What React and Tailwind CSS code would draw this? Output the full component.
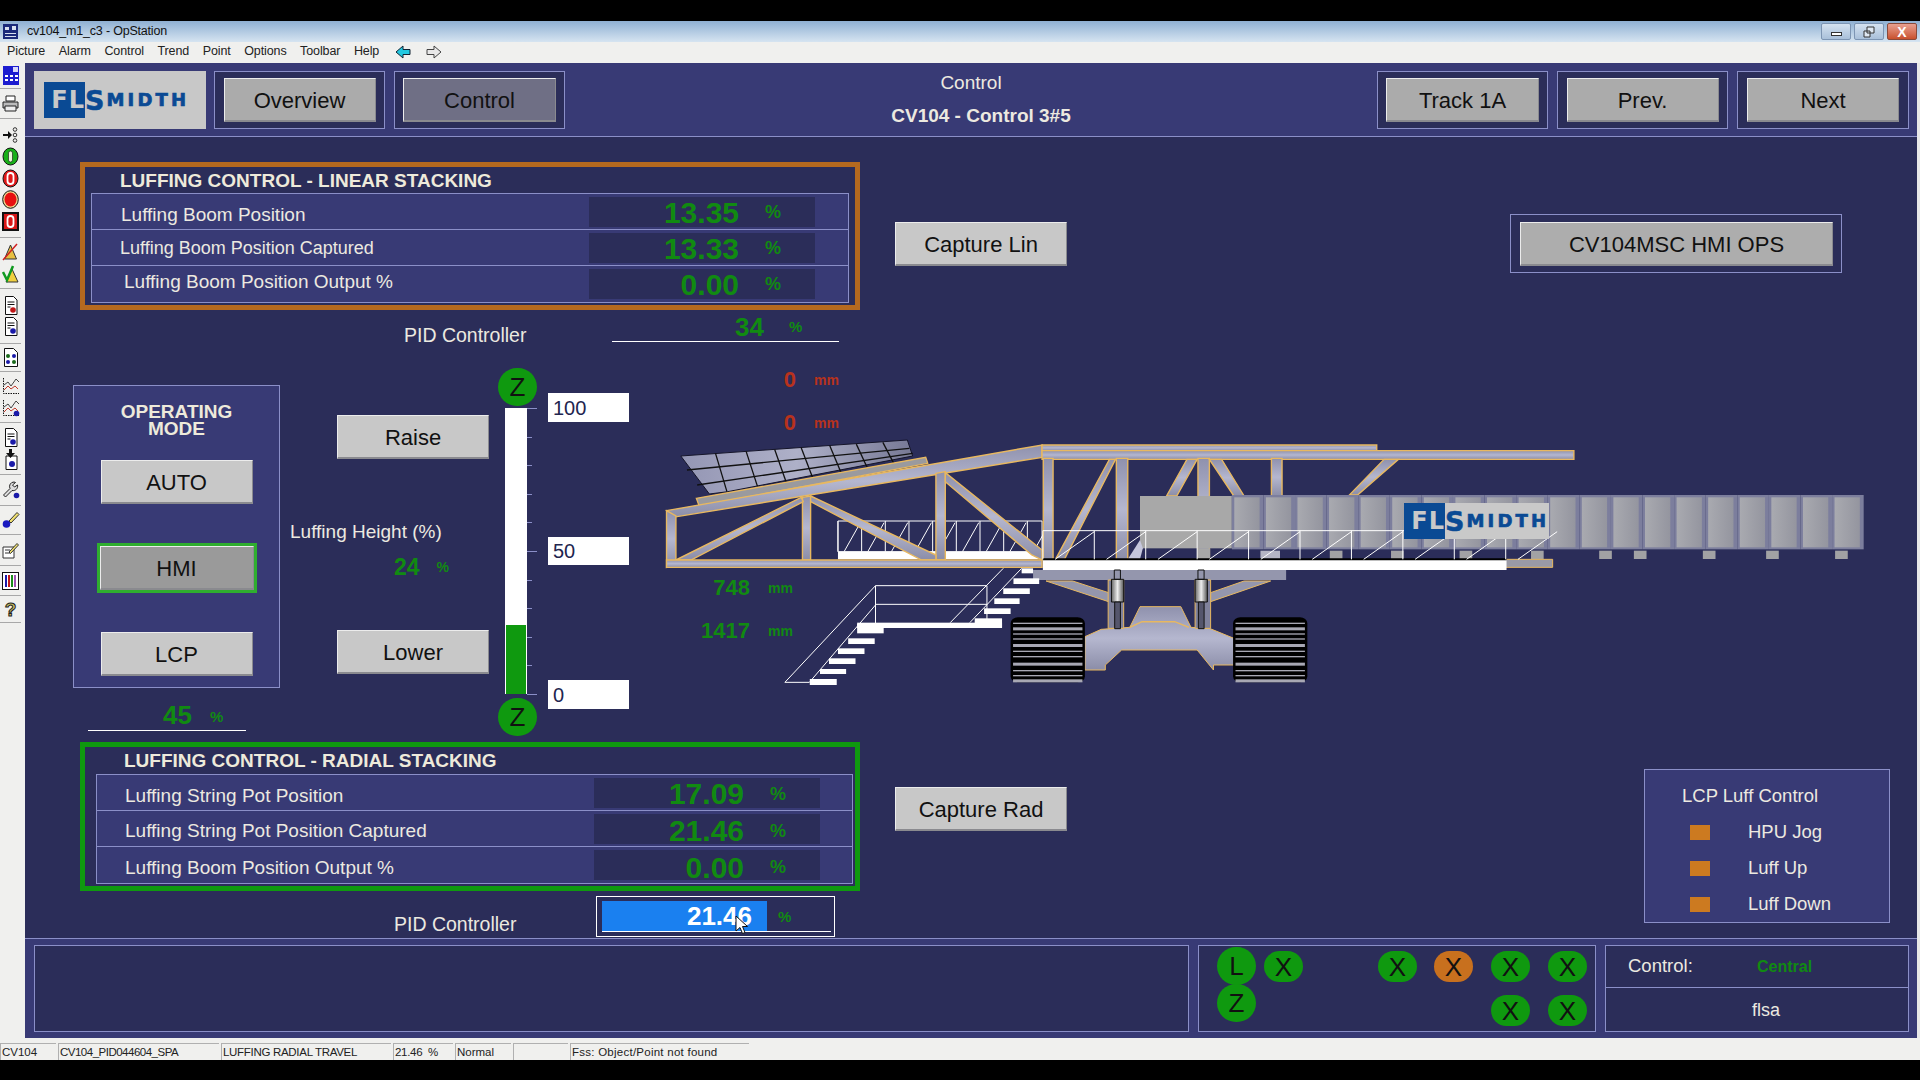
import React from "react";

const hoodX = [185, 260, 330, 395, 465, 530, 595];
const segments = Array.from({ length: 20 }, (_, i) => 1450 + i * 77.4);
const legs = [1690, 1840, 2008, 2183, 2350, 2435, 2604, 2759, 2928];
const stairSteps = [
  [820, 887, 595, 622], [843, 908, 565, 582], [868, 930, 535, 552], [890, 955, 505, 522], [915, 978, 475, 492], [935, 963, 445, 460],
  [532, 597, 612, 640], [510, 575, 655, 672], [485, 550, 685, 702], [463, 528, 715, 732], [441, 505, 747, 762], [416, 482, 777, 795],
];
const trackLines = [608, 622, 640, 655, 672, 692, 708, 728, 750, 765, 778];
const beams = [
  "65,272 985,75 985,112 80,292",
  "65,272 88,288 88,425 65,442",
  "398,232 418,228 418,420 398,420",
  "725,160 748,155 748,420 725,420",
  "88,420 395,232 400,245 125,420",
  "418,228 725,405 725,420 690,420 418,245",
  "748,158 985,390 985,420 960,405 748,185",
  "65,420 985,420 985,442 65,442",
  "985,75 1805,75 1805,92 985,92",
  "985,92 2288,92 2288,118 985,118",
  "988,115 1012,115 1012,420 988,420",
  "1167,115 1195,115 1195,420 1167,420",
  "1367,115 1395,115 1395,420 1367,420",
  "1547,115 1573,115 1573,228 1547,228",
  "1150,118 1165,118 1040,418 1018,418",
  "1340,118 1365,118 1315,228 1290,228",
  "1395,118 1425,118 1480,228 1455,228",
  "1823,118 1858,118 1758,225 1738,225",
];

function Diagram() {
  // coordinates are in the zoomed crop scale, the viewBox squeezes them back
  return (
    <svg className="absolute left-[615px] top-[283px]" width="1280" height="290" viewBox="0 0 3136 870" preserveAspectRatio="none">
      <defs>
        <linearGradient id="steel" x1="0" y1="0" x2="0" y2="1">
          <stop offset="0" stopColor="#8f91ad" />
          <stop offset="0.5" stopColor="#b5b7cf" />
          <stop offset="1" stopColor="#8b8da8" />
        </linearGradient>
        <linearGradient id="hood" x1="0" y1="0" x2="1" y2="0">
          <stop offset="0" stopColor="#9496b4" />
          <stop offset="0.5" stopColor="#aeb0c8" />
          <stop offset="1" stopColor="#777995" />
        </linearGradient>
        <linearGradient id="seg" x1="0" y1="0" x2="1" y2="0">
          <stop offset="0" stopColor="#a9aab0" />
          <stop offset="1" stopColor="#94959f" />
        </linearGradient>
        <linearGradient id="cyl" x1="0" y1="0" x2="1" y2="0">
          <stop offset="0" stopColor="#666" />
          <stop offset="0.5" stopColor="#eee" />
          <stop offset="1" stopColor="#555" />
        </linearGradient>
      </defs>

      {/* hood */}
      <polygon points="100,108 655,60 668,108 215,215 170,222" fill="url(#hood)" stroke="#15152a" vectorEffect="non-scaling-stroke" />
      {hoodX.map((x) => (
        <line key={x} x1={x} y1={100 - (x - 185) * 0.08} x2={x + 28} y2={215 - (x - 185) * 0.2} stroke="#111" strokeWidth="1.300" vectorEffect="non-scaling-stroke" />
      ))}
      <polyline points="115,150 660,85" fill="none" stroke="#111" strokeWidth="1.300" vectorEffect="non-scaling-stroke" />
      <polyline points="140,195 668,100" fill="none" stroke="#111" strokeWidth="1.300" vectorEffect="non-scaling-stroke" />
      <polygon points="138,235 700,112 705,130 145,258" fill="#9a9a9e" stroke="#e8b860" strokeWidth="1.300" vectorEffect="non-scaling-stroke" />

      {/* rear railing and walkway */}
      <rect x="485" y="303" width="500" height="92" fill="none" stroke="#fff" vectorEffect="non-scaling-stroke" />
      {Array.from({ length: 9 }, (_, i) => 485 + i * 58).map((x) => (
        <g key={x}>
          <line x1={x} y1="303" x2={x} y2="395" stroke="#fff" vectorEffect="non-scaling-stroke" />
          <line x1={x + 15} y1="395" x2={x + 55} y2="308" stroke="#fff" vectorEffect="non-scaling-stroke" />
        </g>
      ))}
      <rect x="485" y="395" width="500" height="23" fill="#fff" />

      {/* truss */}
      {beams.map((p) => (
        <polygon key={p} points={p} fill="url(#steel)" stroke="#e8b860" strokeWidth="1.400" vectorEffect="non-scaling-stroke" />
      ))}

      {/* conveyor sections */}
      <rect x="1225" y="228" width="225" height="157" fill="#a8a8a8" />
      <rect x="1365" y="385" width="32" height="33" fill="#a8a8a8" />
      <polygon points="1195,418 1225,360 1232,385 1225,418" fill="#c5c6dc" />
      {segments.map((x) => (
        <g key={x}>
          <rect x={x} y="225" width="77.4" height="163" fill="#7c7e9d" />
          <rect x={x + 6} y="232" width="62" height="150" fill="url(#seg)" />
        </g>
      ))}
      {legs.map((x) => (
        <rect key={x} x={x} y="392" width="31" height="25" fill="#a2a2a4" />
      ))}
      <rect x="1520" y="392" width="48" height="26" fill="#b5b5c4" />

      {/* deck */}
      <rect x="963" y="450" width="620" height="30" fill="#9496ad" />
      <rect x="2120" y="418" width="116" height="24" fill="#9a9aa6" stroke="#e8b860" vectorEffect="non-scaling-stroke" />
      <rect x="987" y="418" width="1136" height="32" fill="#fff" />
      <line x1="987" y1="418" x2="2123" y2="418" stroke="#000" strokeWidth="2" vectorEffect="non-scaling-stroke" />
      <polyline points="987,332 2123,332" fill="none" stroke="#fff" vectorEffect="non-scaling-stroke" />
      {Array.from({ length: 10 }, (_, i) => 987 + i * 126).map((x) => (
        <g key={x}>
          <line x1={x} y1="332" x2={x} y2="418" stroke="#fff" vectorEffect="non-scaling-stroke" />
          <line x1={x + 30} y1="418" x2={x + 126} y2="335" stroke="#fff" vectorEffect="non-scaling-stroke" />
        </g>
      ))}

      {/* stairs */}
      {[
        [355, 787, 577, 497], [415, 787, 577, 555], [577, 497, 850, 497], [577, 553, 850, 553], [850, 497, 850, 610],
        [577, 497, 577, 610], [760, 608, 890, 445], [808, 608, 935, 445], [355, 787, 415, 787],
      ].map(([a, b, c, d]) => (
        <line key={`${a}${b}${c}${d}`} x1={a} y1={b} x2={c} y2={d} stroke="#fff" vectorEffect="non-scaling-stroke" />
      ))}
      <rect x="532" y="608" width="355" height="16" fill="#fff" />
      {stairSteps.map(([x1, x2, y1, y2]) => (
        <rect key={x1} x={x1} y={y1} width={x2 - x1} height={y2 - y1} fill="#fff" />
      ))}

      {/* crawlers */}
      <polygon points="1090,650 1130,628 1200,622 1225,560 1325,560 1350,622 1395,625 1455,655 1455,735 1405,735 1405,750 1365,690 1180,690 1140,735 1140,750 1090,750" fill="url(#steel)" stroke="#e8b860" vectorEffect="non-scaling-stroke" />
      <polyline points="1200,622 1230,605 1310,605 1345,622" fill="none" stroke="#e8b860" strokeWidth="1.500" vectorEffect="non-scaling-stroke" />
      <polygon points="995,483 1060,483 1148,518 1148,545" fill="#9496ad" stroke="#e8b860" vectorEffect="non-scaling-stroke" />
      <polygon points="1545,483 1480,483 1398,518 1398,545" fill="#9496ad" stroke="#e8b860" vectorEffect="non-scaling-stroke" />
      <rect x="1147" y="480" width="38" height="145" fill="#80829c" stroke="#e8b860" vectorEffect="non-scaling-stroke" />
      <rect x="1360" y="480" width="38" height="145" fill="#80829c" stroke="#e8b860" vectorEffect="non-scaling-stroke" />
      {[1155, 1360].map((x) => (
        <g key={x}>
          <rect x={x} y="478" width="30" height="68" fill="url(#cyl)" stroke="#111" vectorEffect="non-scaling-stroke" />
          <rect x={x + 7} y="450" width="15" height="28" fill="none" stroke="#111" vectorEffect="non-scaling-stroke" />
          <rect x={x + 8} y="546" width="14" height="80" fill="#55566c" stroke="#111" vectorEffect="non-scaling-stroke" />
        </g>
      ))}
      {[908, 1453].map((x) => (
        <g key={x}>
          <rect x={x} y="592" width="182" height="195" rx="18" fill="#000" />
          {trackLines.map((y, i) => (
            <rect key={y} x={x + 6} y={y} width="170" height={i % 3 === 1 ? 9 : 4} fill="#a8a8b4" />
          ))}
        </g>
      ))}
    </svg>
  );
}

function Logo() {
  return (
    <div className="flex h-[36px] items-center font-['DejaVu_Sans',sans-serif] font-bold">
      <div className="flex h-full w-[41px] items-center justify-end bg-[#0a4a94]">
        <span className="text-[24px] leading-none tracking-[1px] text-[#c9c9c9]">FL</span>
      </div>
      <span className="text-[27px] leading-none text-[#0a4a94] [-webkit-text-stroke:0.5px_#0a4a94]">S</span>
      <span className="ml-[2px] text-[18px] leading-none tracking-[3.200px] text-[#0a4a94] [-webkit-text-stroke:0.7px_#0a4a94]">MIDTH</span>
    </div>
  );
}

function Btn({ children, className = "bg-[#c8c8c8]" }) {
  return (
    <div className={`flex h-[44px] items-center justify-center border-t border-l border-t-[#ececec] border-l-[#ececec] border-b-2 border-r border-b-[#8a8a8f] border-r-[#8a8a8f] pt-[2px] text-[22px] leading-none text-[#111] ${className}`}>
      {children}
    </div>
  );
}

function Frame({ label, className, btnClass }) {
  return (
    <div className={`flex h-[58px] items-start justify-center border border-[#8b8fc8] bg-[#2b2d59] pt-[6px] ${className}`}>
      <Btn className={btnClass}>{label}</Btn>
    </div>
  );
}

function Row({ label, value, labelClass, valueClass = "pt-[2px]" }) {
  return (
    <div className="flex h-[36px] items-center border-b border-[#8b8fc8] last:border-b-0">
      <div className={`w-[497px] text-[#ece9e0] ${labelClass}`}>{label}</div>
      <div className={`flex h-[30px] w-[226px] items-center bg-[#2b2d59] ${valueClass}`}>
        <span className="w-[150px] text-right text-[30px] font-bold leading-none text-[#118a11]">{value}</span>
        <span className="ml-[26px] text-[18px] font-bold text-[#118a11]">%</span>
      </div>
    </div>
  );
}

function Circle({ letter, className = "h-[31px] bg-[#0f990f]" }) {
  return (
    <div className={`flex w-[39px] items-center justify-center rounded-full text-[26px] leading-none text-[#111] ${className}`}>
      {letter}
    </div>
  );
}

const Bar = () => (
  <div className="relative ml-[7px] mt-[2px] h-[286px] w-[22px] bg-white">
    <div className="absolute bottom-0 left-px right-px h-[69px] bg-[#0f990f]" />
    {[0, 1, 2, 3, 4, 5, 6, 7, 8, 9, 10].map((i) => (
      <div key={i} className={`mb-[27.6px] ml-[22px] h-px bg-[#8b8fc8] ${i % 5 === 0 ? "w-[10px]" : "w-[5px]"}`} />
    ))}
  </div>
);

const ScaleInput = ({ value, className }) => (
  <div className={`flex w-[81px] items-center bg-white pl-[5px] text-[20px] leading-none text-[#22254f] ${className}`}>{value}</div>
);

const Mm = ({ value, color, className }) => (
  <div className={`absolute flex w-[90px] items-center justify-end font-bold ${color} ${className}`}>
    <span className="text-[22px] leading-none">{value}</span>
    <span className="ml-[18px] w-[24px] text-[14px] leading-none">mm</span>
  </div>
);

const Tool = ({ children }) => <div className="flex h-[21.5px] w-[20px] items-center justify-center">{children}</div>;

const Sep = ({ children, className }) => (
  <div className={`flex w-full flex-col items-center justify-center border-b border-[#a8a8a8] ${className}`}>{children}</div>
);

const DocIcon = ({ mark = "#1a1aa8" }) => (
  <svg width="14" height="19" viewBox="0 0 14 19">
    <path d="M1.5.5h8l3.5 3.5v14.500h-11.500z" fill="#fff" stroke="#111" />
    <path d="M3.500 6h7M3.500 8.500h7M3.500 11h3" stroke="#111" />
    <circle cx="9" cy="14" r="2.800" fill={mark} />
  </svg>
);

const ChartIcon = ({ dot }) => (
  <svg width="18" height="18" viewBox="0 0 18 18">
    <path d="M1.500 1v15.500H17" fill="none" stroke="#111" strokeDasharray="1.500 1" />
    <path d="M2 8l4-3 3 4 5-7 3 3" fill="none" stroke="#444" />
    <path d="M2 13l4-4 3 3 4-3 3 3" fill="none" stroke="#c0392b" />
    {dot && <circle cx="14.500" cy="14.500" r="2.800" fill="#1a1aa8" />}
  </svg>
);

function Toolbar() {
  return (
    <div className="flex h-full w-[25px] flex-col items-start bg-[#f0f0ee] pr-[4px]">
      <div className="w-[21px]">
        <Sep className="h-[26px]">
          <svg width="16" height="19" viewBox="0 0 16 19">
            <rect width="16" height="19" fill="#1c1cd0" />
            <path d="M2 9h3v2h-3zM7 9h3v2h-3zM12 9h3v2h-3zM2 13h3v2h-3zM7 13h3v2h-3zM12 13h3v2h-3z" fill="#fff" />
            <rect x="10" y="1" width="5" height="5" fill="#d8d8f8" />
          </svg>
        </Sep>
        <Sep className="h-[30px]">
          <svg width="17" height="17" viewBox="0 0 17 17">
            <path d="M4 1h9v5h-9z" fill="#fff" stroke="#222" />
            <path d="M1 7h15v6h-15z" fill="#bbb" stroke="#222" />
            <path d="M3 11h11v5h-11z" fill="#eee" stroke="#222" />
          </svg>
        </Sep>
        <Sep className="h-[119px]">
          <Tool>
            <svg width="15" height="16" viewBox="0 0 15 16">
              <path d="M0 7h5v-3l4 4-4 4v-3h-5z" fill="#111" />
              <circle cx="12" cy="2.500" r="1.800" fill="none" stroke="#333" />
              <circle cx="12" cy="8" r="1.800" fill="none" stroke="#333" />
              <circle cx="12" cy="13.500" r="1.800" fill="none" stroke="#333" />
            </svg>
          </Tool>
          <Tool>
            <svg width="17" height="19" viewBox="0 0 17 19">
              <ellipse cx="8.500" cy="9.500" rx="7.500" ry="8.500" fill="#18b018" stroke="#111" />
              <rect x="6.500" y="4" width="4" height="11" rx="2" fill="#e8f8d8" stroke="#111" strokeWidth="0.600" />
            </svg>
          </Tool>
          <Tool>
            <svg width="17" height="19" viewBox="0 0 17 19">
              <ellipse cx="8.500" cy="9.500" rx="7.500" ry="8.500" fill="#e01818" stroke="#111" />
              <rect x="5.500" y="4" width="6" height="11" rx="3" fill="none" stroke="#fff" strokeWidth="1.800" />
            </svg>
          </Tool>
          <Tool>
            <svg width="17" height="19" viewBox="0 0 17 19">
              <ellipse cx="8.500" cy="9.500" rx="7.800" ry="8.800" fill="#f0d890" stroke="#111" />
              <ellipse cx="8.500" cy="9.500" rx="6" ry="7" fill="#e81010" />
            </svg>
          </Tool>
          <Tool>
            <svg width="17" height="19" viewBox="0 0 17 19">
              <rect width="17" height="19" fill="#111" />
              <rect x="2" y="2" width="13" height="15" fill="#d81818" />
              <rect x="5.500" y="4" width="6" height="11" rx="3" fill="none" stroke="#fff" strokeWidth="1.800" />
            </svg>
          </Tool>
        </Sep>
        <Sep className="h-[51px]">
          <Tool>
            <svg width="17" height="18" viewBox="0 0 17 18">
              <path d="M8.500 2l6 14h-12z" fill="#e8c040" stroke="#333" />
              <path d="M1 17l14-16" stroke="#d02020" strokeWidth="1.500" />
            </svg>
          </Tool>
          <Tool>
            <svg width="17" height="18" viewBox="0 0 17 18">
              <path d="M10 4l6 13h-12z" fill="#f0d040" stroke="#333" />
              <path d="M1 7l4 8 6-14" fill="none" stroke="#109a20" strokeWidth="2.500" />
            </svg>
          </Tool>
        </Sep>
        <Sep className="h-[55px]">
          <Tool><DocIcon mark="#c01818" /></Tool>
          <Tool><DocIcon /></Tool>
        </Sep>
        <Sep className="h-[28px]">
          <svg width="16" height="19" viewBox="0 0 16 19">
            <path d="M1.500.5h9l4 4v14h-13z" fill="#fff" stroke="#111" />
            <circle cx="5" cy="8" r="2" fill="#1a6a1a" />
            <circle cx="11" cy="8" r="2" fill="#1a1aa8" />
            <circle cx="5" cy="14" r="2" fill="#1a1aa8" />
            <circle cx="11" cy="14" r="2" fill="#1a6a1a" />
          </svg>
        </Sep>
        <Sep className="h-[51px]">
          <Tool><ChartIcon /></Tool>
          <Tool><ChartIcon dot /></Tool>
        </Sep>
        <Sep className="h-[52px]">
          <Tool><DocIcon /></Tool>
          <Tool>
            <svg width="14" height="21" viewBox="0 0 14 21">
              <path d="M2 7h11v13.500h-11z" fill="#fff" stroke="#111" />
              <path d="M5 0h3v4h3l-4.500 5-4.500-5h3z" fill="#111" />
              <circle cx="8" cy="15" r="3" fill="#1a1aa8" />
            </svg>
          </Tool>
        </Sep>
        <Sep className="h-[31px]">
          <svg width="18" height="18" viewBox="0 0 18 18">
            <path d="M12 1a4.500 4.500 0 0 0-4 6.500l-6.500 6.500 2 2 6.500-6.500a4.500 4.500 0 0 0 5.500-5.500l-3 2-2-2 3-2.500z" fill="#ddd" stroke="#222" />
            <circle cx="14.500" cy="14.500" r="2.800" fill="#1a1aa8" />
          </svg>
        </Sep>
        <Sep className="h-[29px]">
          <svg width="18" height="18" viewBox="0 0 18 18">
            <circle cx="4.500" cy="13" r="3.800" fill="#1a1ac0" />
            <path d="M7 10l8-8.500 2 2-8 8.500z" fill="#f0e070" stroke="#333" />
          </svg>
        </Sep>
        <Sep className="h-[31px]">
          <svg width="17" height="17" viewBox="0 0 17 17">
            <path d="M1 5h11v11h-11z" fill="#fff" stroke="#333" />
            <path d="M3 8h5M3 11h5" stroke="#333" />
            <path d="M7 10l8-8.500 1.500 1.500-8 8.500z" fill="#f0e070" stroke="#333" />
          </svg>
        </Sep>
        <Sep className="h-[30px]">
          <svg width="17" height="18" viewBox="0 0 17 18">
            <rect x="0.500" y="0.500" width="16" height="17" fill="#fff" stroke="#111" />
            <path d="M3 3h2v12h-2z" fill="#1a1aa8" />
            <path d="M6 3h2v12h-2z" fill="#c01818" />
            <path d="M9 3h2v12h-2z" fill="#1a8a1a" />
            <path d="M12 3h2v12h-2z" fill="#a050b0" />
          </svg>
        </Sep>
        <Sep className="h-[27px]">
          <span className="text-[19px] font-bold leading-none text-[#c8c060] [-webkit-text-stroke:1px_#222]">?</span>
        </Sep>
      </div>
    </div>
  );
}

function HeaderBand() {
  return (
    <div className="flex h-[74px] items-start border-b border-[#8b8fc8] bg-[#383a75] pl-[9px] pr-[8px] pt-[8px]">
      <div className="flex h-[58px] w-[172px] items-center bg-[#c8c8c8] pl-[10px]">
        <Logo />
      </div>
      <div className="ml-[8px] w-[171px]">
        <Frame label="Overview" btnClass="w-[152px] bg-[#ababab]" />
      </div>
      <div className="ml-[9px] w-[171px]">
        <Frame label="Control" btnClass="w-[153px] bg-[#6f6f85]" />
      </div>
      <div className="flex flex-1 flex-col items-center text-[#ece9e0]">
        <div className="h-[32px] text-[19px] leading-[24px]">Control</div>
        <div className="pl-[20px] text-[19px] font-bold leading-[25px]">CV104 - Control 3#5</div>
      </div>
      <div className="w-[171px]">
        <Frame label="Track 1A" btnClass="w-[153px] bg-[#ababab]" />
      </div>
      <div className="ml-[9px] w-[171px]">
        <Frame label="Prev." btnClass="w-[152px] bg-[#ababab]" />
      </div>
      <div className="ml-[9px] w-[172px]">
        <Frame label="Next" btnClass="w-[152px] bg-[#ababab]" />
      </div>
    </div>
  );
}

function LeftColumn() {
  return (
    <div className="ml-[48px] w-[787px] pt-[25px]">
      {/* linear stacking */}
      <div className="ml-[7px] h-[148px] w-[780px] border-[5px] border-[#b5691f]">
        <div className="flex h-[26px] items-center pl-[35px] text-[19px] font-bold leading-none text-[#eeeadb]">LUFFING CONTROL - LINEAR STACKING</div>
        <div className="ml-[6px] w-[758px] border border-[#8b8fc8] bg-[#383a75]">
          <Row label="Luffing Boom Position" value="13.35" labelClass="pl-[29px] pt-[8px] text-[19px]" />
          <Row label="Luffing Boom Position Captured" value="13.33" labelClass="pl-[28px] pt-[2px] text-[18px]" />
          <Row label="Luffing Boom Position Output %" value="0.00" labelClass="pb-[4px] pl-[32px] text-[19px]" valueClass="pt-[1px]" />
        </div>
      </div>

      {/* upper PID */}
      <div className="ml-[331px] flex h-[32px] items-end">
        <div className="-mb-[6px] w-[208px] text-[19.500px] leading-[26px] text-[#ece9e0]">PID Controller</div>
        <div className="flex h-[30px] w-[227px] items-center border-b border-white pl-[123px] font-bold text-[#118a11]">
          <span className="text-[26px] leading-none">34</span>
          <span className="ml-[25px] text-[15px] leading-none">%</span>
        </div>
      </div>

      {/* mode, raise/lower and height bar */}
      <div className="mt-[26px] flex h-[372px] items-start">
        <div className="mt-[17px] w-[207px]">
          <div className="flex h-[303px] flex-col items-center border border-[#8b8fc8] bg-[#383a75]">
            <div className="mt-[17px] text-center text-[19px] font-bold leading-[17px] text-[#eeeadb]">OPERATING<br />MODE</div>
            <Btn className="mt-[23px] w-[152px] bg-[#c8c8c8]">AUTO</Btn>
            <div className="mt-[39px] w-[160px] border-[3px] border-[#2fae2f]">
              <Btn className="w-full bg-[#9a9a9a]">HMI</Btn>
            </div>
            <Btn className="mt-[39px] w-[152px] bg-[#c8c8c8]">LCP</Btn>
          </div>
          <div className="ml-[15px] flex h-[43px] w-[158px] items-end border-b border-white pb-px pl-[75px] font-bold text-[#118a11]">
            <span className="text-[26px] leading-[28px]">45</span>
            <span className="mb-[5px] ml-[18px] text-[15px] leading-none">%</span>
          </div>
        </div>

        <div className="ml-[10px] w-[200px]">
          <Btn className="ml-[47px] mt-[47px] w-[152px] bg-[#c8c8c8]">Raise</Btn>
          <div className="mt-[61px] h-[24px] text-[19px] leading-[24px] text-[#ece9e0]">Luffing Height (%)</div>
          <div className="ml-[104px] mt-[10px] flex h-[26px] items-center font-bold text-[#118a11]">
            <span className="text-[23px] leading-none">24</span>
            <span className="ml-[17px] text-[14px] leading-none">%</span>
          </div>
          <Btn className="ml-[47px] mt-[50px] w-[152px] bg-[#c8c8c8]">Lower</Btn>
        </div>

        <div className="ml-[8px] w-[39px]">
          <Circle letter="Z" className="h-[38px] bg-[#0f990f]" />
          <Bar />
          <Circle letter="Z" className="mt-[4px] h-[38px] bg-[#0f990f]" />
        </div>

        <div className="ml-[11px]">
          <ScaleInput value="100" className="mt-[25px] h-[29px]" />
          <ScaleInput value="50" className="mt-[115px] h-[28px]" />
          <ScaleInput value="0" className="mt-[115px] h-[29px]" />
        </div>
      </div>

      {/* radial stacking */}
      <div className="ml-[7px] mt-[2px] h-[149px] w-[780px] border-[5px] border-[#0f990f]">
        <div className="flex h-[27px] items-center pl-[39px] text-[19px] font-bold leading-none text-[#eeeadb]">LUFFING CONTROL - RADIAL STACKING</div>
        <div className="ml-[11px] w-[757px] border border-[#8b8fc8] bg-[#383a75]">
          <Row label="Luffing String Pot Position" value="17.09" labelClass="pl-[28px] pt-[8px] text-[19px]" valueClass="pt-[3px]" />
          <Row label="Luffing String Pot Position Captured" value="21.46" labelClass="pl-[28px] pt-[5px] text-[19px]" valueClass="pt-[5px]" />
          <Row label="Luffing Boom Position Output %" value="0.00" labelClass="pl-[28px] pt-[6px] text-[19px]" valueClass="pt-[5px]" />
        </div>
      </div>

      {/* lower PID */}
      <div className="ml-[321px] mt-[5px] flex items-end">
        <div className="w-[202px] text-[19.500px] leading-[26px] text-[#ece9e0]">PID Controller</div>
        <div className="relative h-[41px] w-[239px] border border-white px-[5px] pt-[4px]">
          <div className="flex h-[31px] w-[229px] items-center border-b border-white font-bold">
            <div className="flex h-full w-[165px] items-center justify-end bg-[#1a80f0] pr-[15px] text-[26px] leading-none text-white">21.46</div>
            <span className="ml-[11px] text-[15px] leading-none text-[#118a11]">%</span>
          </div>
          <svg className="absolute left-[138px] top-[18px]" width="13" height="20" viewBox="0 0 13 20">
            <path d="M1 1v15l4-3.500 2.500 6 2.500-1-2.500-6h5z" fill="#fff" stroke="#111" />
          </svg>
        </div>
      </div>
    </div>
  );
}

function BottomBand() {
  return (
    <div className="flex h-[100px] border-t border-[#8b8fc8] bg-[#383a75] pl-[9px] pt-[6px] text-[#ece9e0]">
      <div className="h-[87px] w-[1155px] border border-[#8b8fc8] bg-[#2b2d59]" />
      <div className="ml-[9px] flex h-[87px] w-[398px] border border-[#8b8fc8] bg-[#2b2d59] pl-[18px] pt-[1px]">
        <div className="w-[39px]">
          <Circle letter="L" className="h-[38px] bg-[#0f990f]" />
          <Circle letter="Z" className="-mt-px h-[38px] bg-[#0f990f]" />
        </div>
        <Circle letter="X" className="ml-[8px] mt-[4px] h-[31px] bg-[#0f990f]" />
        <Circle letter="X" className="ml-[75px] mt-[4px] h-[31px] bg-[#0f990f]" />
        <Circle letter="X" className="ml-[17px] mt-[4px] h-[31px] bg-[#c8701e]" />
        <div className="ml-[18px] w-[39px]">
          <Circle letter="X" className="mt-[4px] h-[31px] bg-[#0f990f]" />
          <Circle letter="X" className="mt-[13px] h-[31px] bg-[#0f990f]" />
        </div>
        <div className="ml-[18px] w-[39px]">
          <Circle letter="X" className="mt-[4px] h-[31px] bg-[#0f990f]" />
          <Circle letter="X" className="mt-[13px] h-[31px] bg-[#0f990f]" />
        </div>
      </div>
      <div className="ml-[9px] h-[87px] w-[304px] border border-[#8b8fc8] bg-[#2b2d59]">
        <div className="flex h-[42px] items-center border-b border-[#8b8fc8] pl-[22px] text-[18.500px] leading-none">
          <span className="w-[129px]">Control:</span>
          <span className="text-[16px] font-bold text-[#118a11]">Central</span>
        </div>
        <div className="flex h-[44px] items-center justify-center pl-[18px] text-[18px] leading-none">flsa</div>
      </div>
    </div>
  );
}

function StatusBar() {
  const cells = [
    ["CV104", "ml-0 w-[56px]", ""],
    ["CV104_PID044604_SPA", "w-[161px]", "tracking-[-0.5px]"],
    ["LUFFING RADIAL TRAVEL", "w-[170px]", "tracking-[-0.3px]"],
    ["21.46  %", "w-[60px]", "tracking-[-0.3px]"],
    ["Normal", "w-[56px]", ""],
    ["", "w-[55px]", ""],
    ["Fss: Object/Point not found", "w-[179px]", "tracking-[0.25px]"],
  ];
  return (
    <div className="flex h-[22px] gap-[2px] bg-[#f0f0ee] pt-[5px]">
      {cells.map(([text, w, track], i) => (
        <div key={i} className={`h-[17px] whitespace-pre border-t border-l border-[#b0b0b0] pl-px text-[11.500px] leading-[17px] text-[#222] ${w} ${track}`}>{text}</div>
      ))}
    </div>
  );
}

export default function App() {
  const menus = ["Picture", "Alarm", "Control", "Trend", "Point", "Options", "Toolbar", "Help"];
  return (
    <div className="flex h-[1080px] w-[1920px] flex-col overflow-hidden bg-black font-['Liberation_Sans',Arial,sans-serif]">
      <div className="h-[21px] shrink-0 bg-black" />

      {/* title bar */}
      <div className="flex h-[21px] shrink-0 items-center bg-gradient-to-b from-[#8fb0d2] to-[#d6e4f1] pl-[3px] text-[12.500px] text-[#111]">
        <svg width="15" height="15" viewBox="0 0 15 15">
          <rect width="15" height="15" fill="#1b2a7a" />
          <path d="M2 3h4v3h-4zM9 2h4v4h-4zM2 9h11v1h-11zM2 12h11v1h-11z" fill="#d8e0f0" />
        </svg>
        <span className="ml-[9px] tracking-[-0.2px]">cv104_m1_c3 - OpStation</span>
        <div className="ml-auto mr-[3px] flex gap-[3px]">
          <div className="flex h-[17px] w-[30px] items-center justify-center rounded-[2px] border border-[#7d95b3] bg-gradient-to-b from-[#d5e2f0] to-[#a9c0da]">
            <div className="mt-[4px] h-[4px] w-[11px] border border-[#333] bg-white" />
          </div>
          <div className="flex h-[17px] w-[30px] items-center justify-center rounded-[2px] border border-[#7d95b3] bg-gradient-to-b from-[#d5e2f0] to-[#a9c0da]">
            <svg width="12" height="12" viewBox="0 0 12 12">
              <path d="M4 1h7v6h-7zM1 5h6v6h-6z" fill="#dfe8f2" stroke="#333" />
            </svg>
          </div>
          <div className="flex h-[17px] w-[30px] items-center justify-center rounded-[2px] border border-[#8a4a3a] bg-gradient-to-b from-[#e8a090] to-[#c8502c] text-[14px] font-bold leading-none text-white">X</div>
        </div>
      </div>

      {/* menu */}
      <div className="flex h-[21px] shrink-0 items-center gap-[13.500px] bg-[#f0f0ee] pb-[2px] pl-[7px] text-[12.500px] tracking-[-0.1px] text-[#222]">
        {menus.map((m) => (
          <span key={m}>{m}</span>
        ))}
        <svg className="ml-[2px]" width="16" height="14" viewBox="0 0 16 14">
          <path d="M1 7l7-6v3.500h7v5h-7v3.500z" fill="#22c8e0" stroke="#123" />
        </svg>
        <svg className="ml-[2px]" width="16" height="14" viewBox="0 0 16 14">
          <path d="M15 7l-7-6v3.500h-7v5h7v3.500z" fill="#e8e8e8" stroke="#444" />
        </svg>
      </div>

      <div className="flex h-[975px] shrink-0">
        <Toolbar />
        <div className="flex h-full w-[1892px] flex-col">
          <HeaderBand />

          {/* graphic area */}
          <div className="relative flex h-[801px] bg-[#2b2d59]">
            <Diagram />
            <div className="absolute left-[1379px] top-[366px] z-10 bg-[#c9c9c9]">
              <Logo />
            </div>
            <Mm value="0" color="text-[#b8321c]" className="left-[723px] top-[232px] h-[22px]" />
            <Mm value="0" color="text-[#b8321c]" className="left-[723px] top-[275px] h-[22px]" />
            <Mm value="748" color="text-[#118a11]" className="left-[677px] top-[440px] h-[22px]" />
            <Mm value="1417" color="text-[#118a11]" className="left-[677px] top-[483px] h-[22px]" />

            <LeftColumn />

            <div className="ml-[35px] w-[172px] pt-[85px]">
              <Btn className="w-[172px] bg-[#c8c8c8] text-[21.500px]">Capture Lin</Btn>
              <Btn className="mt-[521px] w-[172px] bg-[#c8c8c8] text-[21.500px]">Capture Rad</Btn>
            </div>

            <div className="ml-[443px] w-[380px] pt-[77px]">
              <div className="flex h-[59px] w-[332px] items-start border border-[#8b8fc8] pl-[9px] pt-[7px]">
                <Btn className="w-[313px] bg-[#adadad]">CV104MSC HMI OPS</Btn>
              </div>
              <div className="ml-[134px] mt-[496px] h-[154px] w-[246px] border border-[#8b8fc8] bg-[#383a75] pt-[13px] text-[18.500px] leading-[26px] text-[#ece9e0]">
                <div className="pl-[37px]">LCP Luff Control</div>
                {["HPU Jog", "Luff Up", "Luff Down"].map((label) => (
                  <div key={label} className="mt-[10px] flex h-[26px] items-center pl-[45px]">
                    <div className="h-[15px] w-[20px] bg-[#cc7a20]" />
                    <span className="ml-[38px]">{label}</span>
                  </div>
                ))}
              </div>
            </div>
          </div>

          <BottomBand />
        </div>
        <div className="w-[3px] bg-[#e8e8e8]" />
      </div>

      <StatusBar />
    </div>
  );
}
